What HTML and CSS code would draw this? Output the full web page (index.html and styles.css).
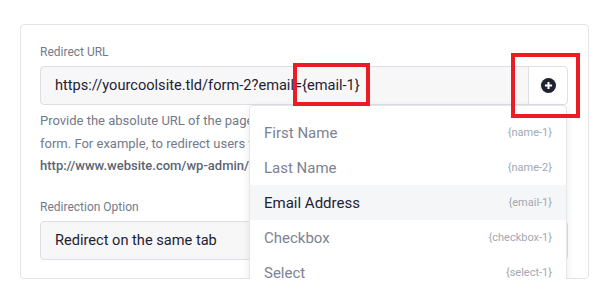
FILE: index.html
```
<!DOCTYPE html>
<html>
<head>
    <title>Redirect settings</title>
    <link rel="stylesheet" href="styles.css">
</head>
<body>
    <div class="card">
        <div class="field-label">Redirect URL</div>
        <div class="input-group">
            <div class="input-text">https://yourcoolsite.tld/form-2?email={email-1}</div>
            <div class="input-btn">
                <span class="ghost">ds</span>
                <svg class="plus" width="15" height="15" viewBox="0 0 16 16">
                    <circle cx="8" cy="8" r="8" fill="#1f2330"/>
                    <path d="M8 4.2v7.6M4.2 8h7.6" stroke="#fff" stroke-width="2.2"/>
                </svg>
            </div>
        </div>
        <p class="help">
            Provide the absolute URL of the page you want to redirect users to after they submit the<br>
            form. For example, to redirect users to the dashboard, set the redirect URL to<br>
            <strong>http://www.website.com/wp-admin/</strong>.
        </p>

        <div class="field-label second">Redirection Option</div>
        <div class="select-box">Redirect on the same tab</div>

        <!-- overlays -->
        <div class="dropdown">
            <div class="dd-item"><span>First Name</span><small>{name-1}</small></div>
            <div class="dd-item"><span>Last Name</span><small>{name-2}</small></div>
            <div class="dd-item active"><span>Email Address</span><small>{email-1}</small></div>
            <div class="dd-item"><span>Checkbox</span><small>{checkbox-1}</small></div>
            <div class="dd-item"><span>Select</span><small>{select-1}</small></div>
        </div>
        <div class="mark mark-token"></div>
        <div class="mark mark-btn"></div>
    </div>
</body>
</html>
```

FILE: styles.css
```
body {
    margin: 0;
    background: #fff;
    font-family: Roboto, 'Liberation Sans', Arial, sans-serif;
    color: #1e2235;
}
.card {
    position: relative;
    margin: 24px 0 0 20px;
    width: 528px;
    height: 234px;
    padding: 19px 20px 0 19px;
    border: 1px solid #e3e5e9;
    border-radius: 4px;
}
.field-label {
    font-size: 12px;
    line-height: 16px;
    color: #737a8c;
    margin-bottom: 6px;
}
.field-label.second {
    margin-top: 21px;
    margin-bottom: 6px;
}
.input-group {
    display: flex;
    height: 37px;
    border: 1px solid #dcdfe5;
    border-radius: 4px;
    background: #f7f7f8;
}
.input-text {
    flex: 1;
    padding-left: 14px;
    font-size: 14.6px;
    line-height: 37px;
    white-space: nowrap;
    overflow: hidden;
}
.input-btn {
    position: relative;
    width: 38px;
    display: flex;
    align-items: center;
    justify-content: center;
    background: #fff;
    border-left: 1px solid #dcdfe5;
    border-radius: 0 4px 4px 0;
}
.ghost {
    position: absolute;
    left: 10px;
    font-size: 16px;
    color: #eceef2;
}
.plus {
    position: relative;
}
.help {
    margin: 5px 0 0;
    font-size: 13px;
    line-height: 22.5px;
    color: #737a8c;
    white-space: nowrap;
    overflow: hidden;
    height: 68px;
}
.help strong {
    font-weight: 500;
    color: #5d6476;
}
.select-box {
    height: 37px;
    border: 1px solid #dcdfe5;
    border-radius: 4px;
    background: #f7f7f8;
    padding-left: 14px;
    font-size: 14.6px;
    line-height: 37px;
}
.dropdown {
    position: absolute;
    left: 228px;
    top: 80px;
    width: 316px;
    padding: 9px 0 10px;
    background: #fff;
    border: 1px solid #e4e6eb;
    border-radius: 4px;
    box-shadow: 0 2px 8px rgba(0, 0, 0, 0.08);
}
.dd-item {
    display: flex;
    justify-content: space-between;
    align-items: center;
    height: 35px;
    padding: 0 14px;
    font-size: 15px;
    color: #7d8293;
}
.dd-item small {
    font-size: 11px;
    color: #a3a8b3;
}
.dd-item.active {
    background: #f5f6f7;
    color: #1e2235;
}
.mark {
    position: absolute;
    border: 4px solid #ec1c24;
}
.mark-token {
    left: 272px;
    top: 38px;
    width: 69px;
    height: 35px;
}
.mark-btn {
    left: 490px;
    top: 28px;
    width: 61px;
    height: 57px;
}
```
